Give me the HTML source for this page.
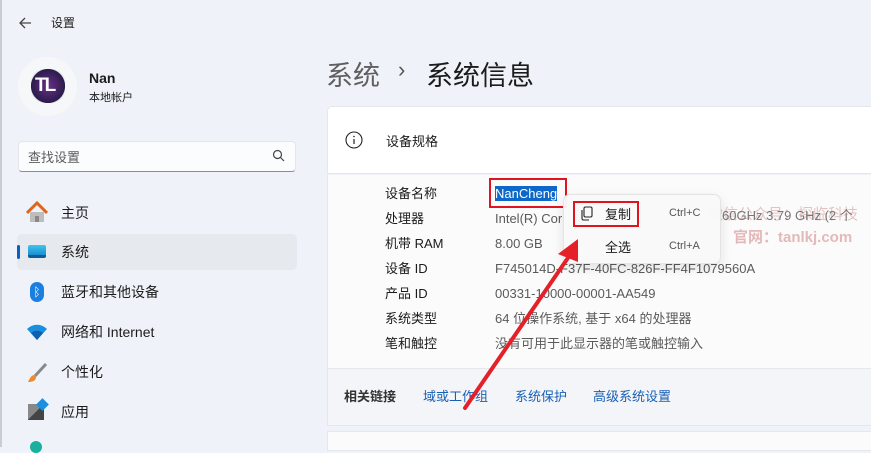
<!DOCTYPE html>
<html><head><meta charset="utf-8"><style>
*{margin:0;padding:0;box-sizing:border-box}
body{width:871px;height:447px;overflow:hidden;background:#eff3f9;font-family:"Liberation Sans","Noto Sans CJK SC",sans-serif;position:relative;color:#1b1b1b}
.a{position:absolute;white-space:nowrap}
.nav{font-size:14px}
</style></head><body>
<div class="a" style="left:0;top:0;width:2px;height:447px;background:#c9cdd3"></div>
<svg class="a" style="left:17px;top:15px" width="16" height="16" viewBox="0 0 16 16"><path d="M14 8H3M8 3L3 8l5 5" stroke="#444" stroke-width="1.3" fill="none"/></svg>
<div class="a" style="left:51px;top:14px;font-size:12px">设置</div>
<div class="a" style="left:18px;top:57px;width:59px;height:59px;border-radius:50%;background:#f6f7f9"></div>
<div class="a" style="left:31px;top:69px;width:34px;height:34px;border-radius:40%;background:radial-gradient(circle,#6a2f8a,#2a1c4a 70%,#e0e3ea 72%)"></div>
<div class="a" style="left:35px;top:75px;font-size:19px;font-weight:bold;color:#fff;letter-spacing:-2px">TL</div>
<div class="a" style="left:89px;top:70px;font-size:14px;font-weight:bold">Nan</div>
<div class="a" style="left:89px;top:89px;font-size:11px">本地帐户</div>
<div class="a" style="left:18px;top:141px;width:278px;height:31px;background:#fbfcfd;border:1px solid #e2e5ea;border-bottom:1px solid #8a8d92;border-radius:4px"></div>
<div class="a" style="left:28px;top:147px;font-size:13px;color:#5c5c5c">查找设置</div>
<svg class="a" style="left:272px;top:149px" width="13" height="13" viewBox="0 0 13 13"><circle cx="5.5" cy="5.5" r="4" stroke="#444" stroke-width="1.2" fill="none"/><path d="M8.5 8.5L12 12" stroke="#444" stroke-width="1.2"/></svg>
<div class="a" style="left:17px;top:234px;width:280px;height:36px;background:#e6e9ee;border-radius:5px"></div>
<div class="a" style="left:17px;top:245px;width:3px;height:14px;background:#0a5fc0;border-radius:2px"></div>
<svg class="a" style="left:26px;top:201px" width="22" height="22" viewBox="0 0 22 22"><path d="M4 11v10h14V11" fill="#bdbdbd"/><path d="M9 21v-6h4v6" fill="#888"/><path d="M1 12L11 2l10 10" stroke="#e0651a" stroke-width="3" fill="none"/></svg>
<div class="a nav" style="left:61px;top:203px">主页</div>
<div class="a" style="left:28px;top:245px;width:18px;height:13px;background:linear-gradient(#3cc6ee,#1a8fd0);border-radius:2px;border-bottom:3px solid #0d5d9a"></div>
<div class="a nav" style="left:61px;top:242px">系统</div>
<div class="a" style="left:30px;top:282px;width:14px;height:20px;border-radius:7px;background:#1a7fe0;color:#fff;font-size:12px;text-align:center;line-height:20px">ᛒ</div>
<div class="a nav" style="left:61px;top:282px">蓝牙和其他设备</div>
<svg class="a" style="left:26px;top:324px" width="22" height="16" viewBox="0 0 22 16"><path d="M1 5a14 14 0 0 1 20 0L11 16z" fill="#1a8fe0"/><path d="M5 9a9 9 0 0 1 12 0L11 16z" fill="#0d5fb0"/></svg>
<div class="a nav" style="left:61px;top:322px">网络和 Internet</div>
<svg class="a" style="left:26px;top:362px" width="22" height="22" viewBox="0 0 22 22"><path d="M20 2L9 14" stroke="#888" stroke-width="3"/><path d="M9 13c-4 0-5 3-7 7 4 0 8-1 8-5z" fill="#f08a2a"/></svg>
<div class="a nav" style="left:61px;top:362px">个性化</div>
<div class="a" style="left:28px;top:404px;width:16px;height:16px;background:linear-gradient(135deg,#888 50%,#444 50%)"></div>
<div class="a" style="left:38px;top:400px;width:9px;height:9px;background:#1a8fe0;transform:rotate(45deg)"></div>
<div class="a nav" style="left:61px;top:402px">应用</div>
<div class="a" style="left:30px;top:441px;width:12px;height:12px;border-radius:50%;background:#1ab0a0"></div>

<div class="a" style="left:326px;top:54px;font-size:27px;color:#5f5f5f">系统</div>
<div class="a" style="left:398px;top:57px;font-size:22px;color:#555">›</div>
<div class="a" style="left:426px;top:54px;font-size:27px;color:#1b1b1b">系统信息</div>

<div class="a" style="left:327px;top:106px;width:550px;height:68px;background:#fff;border:1px solid #e5e7ea;border-radius:5px 0 0 0"></div>
<svg class="a" style="left:345px;top:131px" width="18" height="18" viewBox="0 0 18 18"><circle cx="9" cy="9" r="8" stroke="#222" stroke-width="1.1" fill="none"/><path d="M9 8v5" stroke="#222" stroke-width="1.2"/><circle cx="9" cy="5.5" r=".8" fill="#222"/></svg>
<div class="a" style="left:386px;top:131px;font-size:13px">设备规格</div>
<div class="a" style="left:327px;top:175px;width:550px;height:193px;background:#fbfbfc;border-left:1px solid #e5e7ea"></div>
<div class="a" style="left:327px;top:368px;width:550px;height:58px;background:#f3f5f8;border:1px solid #e5e7ea"></div>
<div class="a" style="left:327px;top:431px;width:550px;height:20px;background:#fbfbfc;border:1px solid #e5e7ea"></div>

<div style="position:absolute;left:385px;top:181px;font-size:13px;line-height:25px">设备名称<br>处理器<br>机带 RAM<br>设备 ID<br>产品 ID<br>系统类型<br>笔和触控</div>
<div style="position:absolute;left:495px;top:181px;font-size:13px;line-height:25px;color:#5a5a5a;white-space:nowrap"><span style="background:#0d68c9;color:#fff">NanCheng</span><br>Intel(R) Cor<br>8.00 GB<br>F745014D-F37F-40FC-826F-FF4F1079560A<br>00331-10000-00001-AA549<br>64 位操作系统, 基于 x64 的处理器<br>没有可用于此显示器的笔或触控输入</div>
<div class="a" style="left:489px;top:178px;width:78px;height:30px;border:2px solid #e0141e"></div>

<div class="a" style="left:344px;top:386px;font-size:13px;font-weight:bold;color:#333">相关链接</div>
<div class="a" style="left:423px;top:386px;font-size:13px;color:#1a5fb4">域或工作组</div>
<div class="a" style="left:515px;top:386px;font-size:13px;color:#1a5fb4">系统保护</div>
<div class="a" style="left:593px;top:386px;font-size:13px;color:#1a5fb4">高级系统设置</div>

<div class="a" style="left:708px;top:203px;font-size:15px;color:rgba(180,60,60,.3)">微信公众号：探临科技</div>
<div class="a" style="left:722px;top:205px;font-size:13px;color:#777">60GHz  3.79 GHz (2 个</div>
<div class="a" style="left:733px;top:226px;font-size:15px;color:rgba(180,60,60,.35);font-weight:bold">官网：tanlkj.com</div>

<div class="a" style="left:563px;top:194px;width:158px;height:70px;background:rgba(249,249,249,.96);border:1px solid #e4e4e4;border-radius:7px;box-shadow:0 4px 12px rgba(0,0,0,.1)"></div>
<svg class="a" style="left:579px;top:206px" width="15" height="15" viewBox="0 0 15 15"><rect x="5" y="1" width="8" height="10" rx="1.5" stroke="#222" fill="none" stroke-width="1.1"/><path d="M3 4v8.5A1.5 1.5 0 0 0 4.5 14H10" stroke="#222" fill="none" stroke-width="1.1"/></svg>
<div class="a" style="left:605px;top:204px;font-size:13px">复制</div>
<div class="a" style="left:669px;top:207px;font-size:11px;color:#555">Ctrl+C</div>
<div class="a" style="left:573px;top:201px;width:66px;height:26px;border:2px solid #e0141e"></div>
<div class="a" style="left:605px;top:237px;font-size:13px">全选</div>
<div class="a" style="left:669px;top:240px;font-size:11px;color:#555">Ctrl+A</div>

<svg class="a" style="left:0;top:0" width="871" height="447"><path d="M465 408L572 252" stroke="#e42028" stroke-width="4" stroke-linecap="round"/><path d="M578 239L558 254L578 262z" fill="#e42028"/></svg>
</body></html>
